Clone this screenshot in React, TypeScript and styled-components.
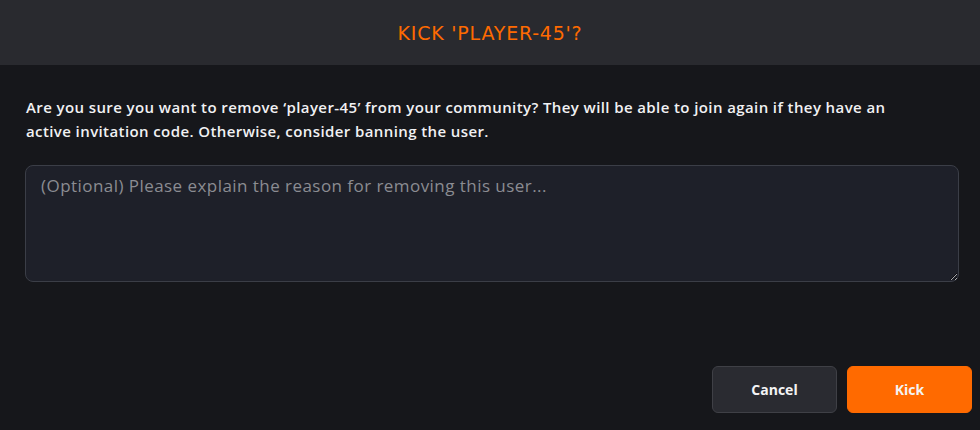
import React from "react";
import styled, { createGlobalStyle } from "styled-components";

const Global = createGlobalStyle`
  html, body { margin: 0; padding: 0; background: #16171b; }
  #root { height: 430px; }
  * { box-sizing: border-box; }
`;

const Dialog = styled.div`
  width: 980px;
  height: 430px;
  display: flex;
  flex-direction: column;
  background: #16171b;
  font-family: "Open Sans", "Noto Sans", sans-serif;
`;

const Header = styled.header`
  height: 65px;
  flex: none;
  display: flex;
  align-items: center;
  justify-content: center;
  background: #292a2f;
`;

const Title = styled.h2`
  margin: 0;
  font-family: "DejaVu Sans", sans-serif;
  font-weight: 400;
  font-size: 19px;
  letter-spacing: 0.8px;
  color: #ff6a00;
`;

const Body = styled.div`
  flex: 1;
  display: flex;
  flex-direction: column;
  padding: 30px 21px 17px 26px;
`;

const Message = styled.p`
  margin: 0;
  max-width: 900px;
  font-size: 15px;
  line-height: 24px;
  font-weight: 600;
  letter-spacing: 0.4px;
  color: #f1f1f3;
`;

const Reason = styled.textarea`
  margin: 22px 0 0 -1px;
  height: 117px;
  width: calc(100% + 1px);
  resize: vertical;
  background: #1e2029;
  border: 1px solid #3b3e47;
  border-radius: 8px;
  padding: 8px 15px;
  font-family: "Open Sans", "Noto Sans", sans-serif;
  font-size: 17px;
  letter-spacing: 0.45px;
  color: #e8e8ea;
  outline: none;
  &::placeholder { color: #8b8c92; }
`;

const Actions = styled.div`
  margin-top: auto;
  display: flex;
  justify-content: flex-end;
  gap: 10px;
  margin-right: -13px;
`;

const Button = styled.button<{ $primary?: boolean }>`
  width: 125px;
  height: 47px;
  border-radius: 6px;
  font-family: "Open Sans", "Noto Sans", sans-serif;
  font-weight: 700;
  font-size: 14px;
  color: #f4f4f5;
  cursor: pointer;
  background: ${(p) => (p.$primary ? "#ff6a00" : "#2a2b31")};
  border: 1px solid ${(p) => (p.$primary ? "#ff6a00" : "#3f4046")};
`;

export default function App() {
  return (
    <>
      <Global />
      <Dialog>
        <Header>
          <Title>KICK 'PLAYER-45'?</Title>
        </Header>
        <Body>
          <Message>
            Are you sure you want to remove ‘player-45’ from your community? They will be able to join again if they have an active invitation code. Otherwise, consider banning the user.
          </Message>
          <Reason placeholder="(Optional) Please explain the reason for removing this user..." />
          <Actions>
            <Button>Cancel</Button>
            <Button $primary>Kick</Button>
          </Actions>
        </Body>
      </Dialog>
    </>
  );
}
